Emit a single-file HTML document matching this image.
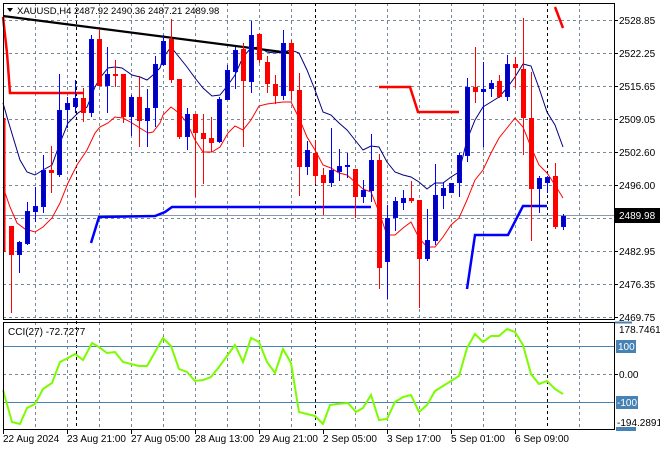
<!DOCTYPE html>
<html><head><meta charset="utf-8"><style>
html,body{margin:0;padding:0;background:#fff;width:660px;height:450px;overflow:hidden}
svg{display:block}
text{font-family:"Liberation Sans",sans-serif;font-size:10px;fill:#000}
</style></head><body>
<svg width="660" height="450" viewBox="0 0 660 450" xmlns="http://www.w3.org/2000/svg">
<rect width="660" height="450" fill="#fff"/>
<g stroke="#778899" stroke-width="1" stroke-dasharray="3,3">
<path d="M35.5 3V319M67.5 3V319M99.5 3V319M131.5 3V319M163.5 3V319M195.5 3V319M227.5 3V319M259.5 3V319M291.5 3V319M355.5 3V319M387.5 3V319M419.5 3V319M451.5 3V319M483.5 3V319M515.5 3V319M579.5 3V319"/>
<path d="M35.5 322V429M67.5 322V429M99.5 322V429M131.5 322V429M163.5 322V429M195.5 322V429M227.5 322V429M259.5 322V429M291.5 322V429M355.5 322V429M387.5 322V429M419.5 322V429M451.5 322V429M483.5 322V429M515.5 322V429M579.5 322V429"/>
<path d="M3 20.5H614M3 53.5H614M3 86.5H614M3 119.5H614M3 152.5H614M3 185.5H614M3 218.5H614M3 251.5H614M3 284.5H614M3 317.5H614"/>
<path d="M3 374.5H614"/>
</g>
<g stroke="#000" stroke-width="1" stroke-dasharray="3,3">
<path d="M76.5 3V429M315.5 3V429M547.5 3V429"/>
</g>
<line x1="3" y1="215.5" x2="614" y2="215.5" stroke="#8899aa" stroke-width="1"/>
<line x1="3" y1="346.5" x2="614" y2="346.5" stroke="#4682b4"/>
<line x1="3" y1="402.5" x2="614" y2="402.5" stroke="#4682b4"/>
<polyline fill="none" stroke="#ff0000" stroke-width="2.5" points="3,17 7,53 10,93 83,93"/>
<polyline fill="none" stroke="#ff0000" stroke-width="2.5" points="379,87 410,87 418,112 459,112"/>
<polyline fill="none" stroke="#ff0000" stroke-width="2.5" points="555,7 563,28"/>
<polyline fill="none" stroke="#0000ff" stroke-width="2.5" points="91,243 99,217 155,216 165,212 172,207 371,207"/>
<polyline fill="none" stroke="#0000ff" stroke-width="2.5" points="467,289 475,235 508,235 523,206 547,206"/>
<polyline fill="none" stroke="#000080" stroke-width="1" points="3,103 7,117 13,137 20,160 27,172 35,175 43,170 52,165 60,143 68,123 78,113 87,107 95,87 100,78 108,68 115,67 122,68 132,75 140,77 147,80 153,75 160,68 163,58 171,47 179,57 187,67 195,78 203,88 212,96 220,95 228,85 235,75 243,57 251,48 259,47 267,52 275,53 283,52 291,50 299,53 307,70 315,90 323,112 331,115 339,123 347,130 355,140 363,150 371,146 379,147 387,162 395,172 403,175 411,177 419,182 427,189 435,183 443,183 451,177 459,172 467,140 475,120 483,107 491,102 499,97 507,88 515,77 523,64 531,66 539,88 547,112 555,125 563,147"/>
<polyline fill="none" stroke="#ff0000" stroke-width="1" points="3,187 10,207 17,223 25,229 35,232 43,227 52,218 60,203 68,183 77,165 87,150 95,133 100,127 108,123 115,117 123,118 132,123 140,128 148,133 153,132 160,123 163,115 171,107 179,113 187,123 195,140 203,152 212,152 220,147 228,133 235,126 243,130 251,120 259,106 267,104 275,103 283,102 291,102 299,118 307,137 315,150 323,165 331,168 339,173 347,175 355,182 363,189 371,192 379,212 387,235 395,235 403,228 411,222 419,238 427,247 435,247 443,237 451,225 459,218 467,200 475,180 483,170 491,153 499,138 507,128 515,118 523,127 531,147 539,165 547,173 555,185 563,198"/>
<line x1="3" y1="16" x2="290" y2="53" stroke="#000" stroke-width="2.2"/>
<g stroke-width="1">
<rect x="3" y="118" width="2.5" height="134" fill="#ff0000"/>
<g stroke="#ff0000"><path d="M11.5 226V313M51.5 146V193M83.5 88V122M99.5 29V86M115.5 60V87M123.5 74V123M139.5 76V147M171.5 19V83M179.5 79V139M195.5 114V197M203.5 114V184M211.5 117V152M243.5 43V147M259.5 33V63M267.5 56V93M275.5 75V104M291.5 40V100M299.5 73V196M315.5 140V184M323.5 168V215M355.5 169V218M379.5 154V289M411.5 181V203M419.5 200V308M475.5 47V103M499.5 75V98M515.5 57V88M523.5 18V155M531.5 72V241M555.5 163V229"/></g>
<g stroke="#0000ff"><path d="M19.5 241V273M27.5 202V245M35.5 187V222M43.5 155V213M59.5 74V177M67.5 97V128M75.5 80V113M91.5 35V117M107.5 47V113M131.5 95V136M147.5 89V147M155.5 56V127M163.5 35V66M187.5 108V150M219.5 97V143M227.5 65V100M235.5 47V89M251.5 21V93M283.5 30V100M307.5 141V175M331.5 128V187M339.5 149V181M347.5 153V178M363.5 180V203M371.5 134V202M387.5 205V299M395.5 197V231M403.5 190V210M427.5 209V261M435.5 164V245M443.5 182V209M451.5 183V193M459.5 153V197M467.5 78V162M483.5 62V147M491.5 80V97M507.5 55V101M539.5 176V213M547.5 176V193M563.5 214V230"/></g>
<g fill="#ff0000">
<rect x="9" y="226" width="5" height="29"/><rect x="49" y="170" width="5" height="3"/><rect x="81" y="98" width="5" height="15"/><rect x="97" y="39" width="5" height="47"/><rect x="113" y="74" width="5" height="2"/><rect x="121" y="74" width="5" height="43"/><rect x="137" y="97" width="5" height="24"/><rect x="169" y="39" width="5" height="41"/><rect x="177" y="79" width="5" height="58"/><rect x="193" y="114" width="5" height="19"/><rect x="201" y="133" width="5" height="6"/><rect x="209" y="138" width="5" height="5"/><rect x="241" y="49" width="5" height="32"/><rect x="257" y="34" width="5" height="26"/><rect x="265" y="62" width="5" height="22"/><rect x="273" y="84" width="5" height="12"/><rect x="289" y="43" width="5" height="48"/><rect x="297" y="90" width="5" height="77"/><rect x="313" y="153" width="5" height="23"/><rect x="321" y="175" width="5" height="8"/><rect x="353" y="169" width="5" height="28"/><rect x="377" y="160" width="5" height="108"/><rect x="409" y="198" width="5" height="3"/><rect x="417" y="200" width="5" height="59"/><rect x="473" y="87" width="5" height="5"/><rect x="497" y="81" width="5" height="16"/><rect x="513" y="64" width="5" height="4"/><rect x="521" y="69" width="5" height="49"/><rect x="529" y="118" width="5" height="71"/><rect x="553" y="176" width="5" height="51"/>
</g>
<g fill="#0000a8" stroke="#0000ff">
<rect x="17.5" y="242.5" width="4" height="12"/><rect x="25.5" y="211.5" width="4" height="32"/><rect x="33.5" y="206.5" width="4" height="5"/><rect x="41.5" y="170.5" width="4" height="36"/><rect x="57.5" y="110.5" width="4" height="64"/><rect x="65.5" y="103.5" width="4" height="6"/><rect x="73.5" y="98.5" width="4" height="8"/><rect x="89.5" y="39.5" width="4" height="73"/><rect x="105.5" y="74.5" width="4" height="11"/><rect x="129.5" y="97.5" width="4" height="19"/><rect x="145.5" y="108.5" width="4" height="12"/><rect x="153.5" y="64.5" width="4" height="43"/><rect x="161.5" y="41.5" width="4" height="23"/><rect x="185.5" y="114.5" width="4" height="22"/><rect x="217.5" y="99.5" width="4" height="42"/><rect x="225.5" y="70.5" width="4" height="29"/><rect x="233.5" y="50.5" width="4" height="21"/><rect x="249.5" y="35.5" width="4" height="46"/><rect x="281.5" y="43.5" width="4" height="52"/><rect x="305.5" y="150.5" width="4" height="16"/><rect x="329.5" y="170.5" width="4" height="12"/><rect x="337.5" y="166.5" width="4" height="5"/><rect x="345.5" y="165.5" width="4" height="1"/><rect x="361.5" y="190.5" width="4" height="6"/><rect x="369.5" y="160.5" width="4" height="30"/><rect x="385.5" y="218.5" width="4" height="43"/><rect x="393.5" y="201.5" width="4" height="16"/><rect x="401.5" y="198.5" width="4" height="4"/><rect x="425.5" y="240.5" width="4" height="18"/><rect x="433.5" y="195.5" width="4" height="45"/><rect x="441.5" y="188.5" width="4" height="7"/><rect x="449.5" y="183.5" width="4" height="9"/><rect x="457.5" y="155.5" width="4" height="27"/><rect x="465.5" y="87.5" width="4" height="68"/><rect x="481.5" y="89.5" width="4" height="2"/><rect x="489.5" y="83.5" width="4" height="5"/><rect x="505.5" y="64.5" width="4" height="32"/><rect x="537.5" y="178.5" width="4" height="10"/><rect x="545.5" y="177.5" width="4" height="5"/><rect x="561.5" y="216.5" width="4" height="10"/>
</g>
</g>
<polyline fill="none" stroke="#7cfc00" stroke-width="2" points="3,390 12,422 20,424 27,408 35,404 43,389 52,383 60,362 68,358 75,354 83,360 92,343 99,347 107,353 115,352 123,362 131,364 139,366 147,366 155,352 163,338 171,346 179,369 187,372 195,381 203,380 211,377 219,367 227,356 235,345 243,362 251,338 259,342 267,362 275,373 283,349 291,363 299,412 307,414 315,416 323,424 330,405 337,404 348,403 356,412 363,408 371,395 379,420 387,419 395,402 403,397 411,395 419,412 427,405 435,391 443,386 451,381 459,376 467,348 475,334 483,342 491,336 499,336 507,329 515,332 523,345 531,374 539,384 547,381 555,389 563,394"/>
<rect x="3.5" y="3.5" width="611" height="316" fill="none" stroke="#000"/>
<rect x="3.5" y="322.5" width="611" height="107" fill="none" stroke="#000"/>
<g stroke="#000"><path d="M614 20.5H618M614 53.5H618M614 86.5H618M614 119.5H618M614 152.5H618M614 185.5H618M614 251.5H618M614 284.5H618M614 317.5H618M614 374.5H618"/>
<path d="M3.5 429V434M67.5 429V434M131.5 429V434M195.5 429V434M259.5 429V434M323.5 429V434M387.5 429V434M451.5 429V434M515.5 429V434"/></g>
<g>
<text x="619" y="24">2528.85</text><text x="619" y="57">2522.25</text><text x="619" y="90">2515.65</text><text x="619" y="123">2509.05</text><text x="619" y="156">2502.60</text><text x="619" y="189">2496.00</text><text x="619" y="255">2482.95</text><text x="619" y="288">2476.35</text><text x="619" y="321">2469.75</text>
</g>
<rect x="615" y="208" width="45" height="15" fill="#000"/>
<text x="619" y="219" style="fill:#fff">2489.98</text>
<line x1="615" y1="322.5" x2="632" y2="322.5" stroke="#4682b4" stroke-width="2"/>
<text x="619" y="333">178.7461</text>
<rect x="616" y="340" width="20" height="13" fill="#4682b4"/>
<text x="618" y="350" style="fill:#fff">100</text>
<text x="619" y="378">0.00</text>
<rect x="616" y="396" width="22" height="13" fill="#4682b4"/>
<text x="617" y="406" style="fill:#fff">-100</text>
<rect x="616" y="427" width="20" height="4" fill="#4682b4"/>
<text x="617" y="426">-194.2891</text>
<g>
<text x="3" y="442">22 Aug 2024</text><text x="67" y="442">23 Aug 21:00</text><text x="131" y="442">27 Aug 05:00</text><text x="195" y="442">28 Aug 13:00</text><text x="259" y="442">29 Aug 21:00</text><text x="323" y="442">2 Sep 05:00</text><text x="387" y="442">3 Sep 17:00</text><text x="451" y="442">5 Sep 01:00</text><text x="515" y="442">6 Sep 09:00</text>
</g>
<polygon points="7,8 13,8 10,12" fill="#000"/>
<text x="17" y="14" style="font-size:9.5px">XAUUSD,H4  2487.92 2490.36 2487.21 2489.98</text>
<text x="8" y="335">CCI(27) -72.7277</text>
</svg>
</body></html>
